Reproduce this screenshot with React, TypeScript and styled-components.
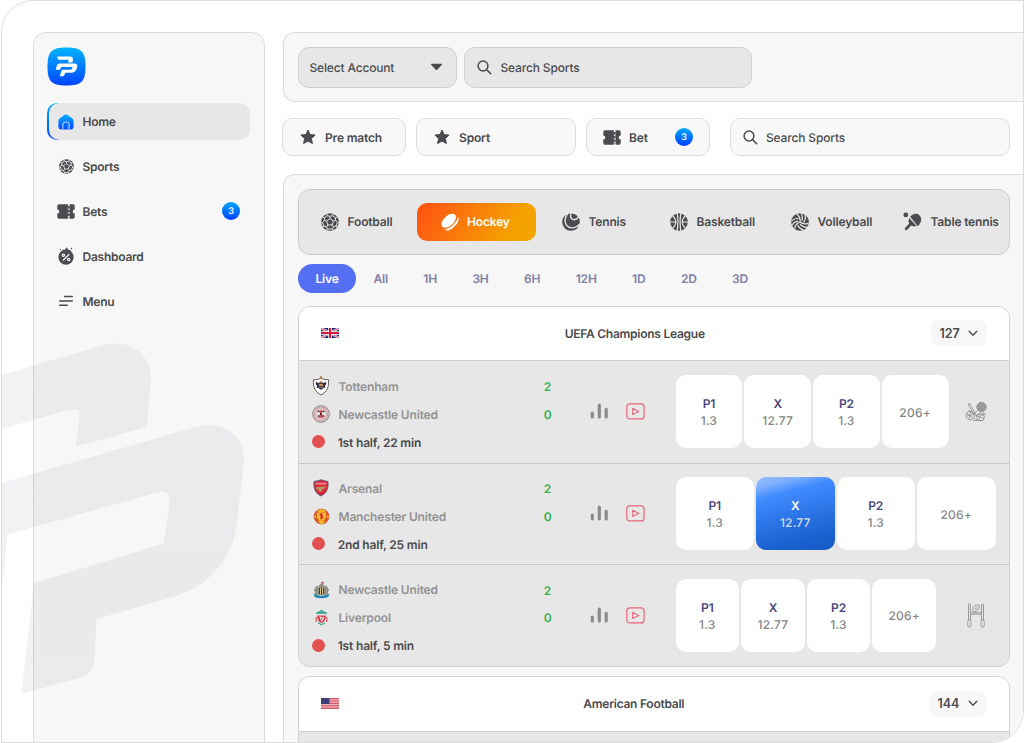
import React from 'react';
import styled, { createGlobalStyle, css } from 'styled-components';

const ink = '#4b4b4d';
const line = '#dcdcdc';
const fog = '#f7f7f7';
const mist = '#e7e7e7';

const GlobalStyle = createGlobalStyle`
  * { box-sizing: border-box; }
  html, body { margin: 0; height: 743px; overflow: hidden; background: #fff; }
  body {
    font-family: Inter, "Liberation Sans", sans-serif;
    font-size: 12px;
    font-weight: 600;
    letter-spacing: -0.17px;
    color: ${ink};
    text-rendering: geometricPrecision;
  }
  svg { display: block; flex: none; }
`;

const Frame = styled.div`
  position: relative;
  display: flex;
  gap: 18px;
  width: 1023px;
  height: 743px;
  margin-left: 1px;
  padding: 31px 0 0 31px;
  border: 1px solid ${line};
  border-radius: 32px 0 32px 0;
  overflow: hidden;
`;

const Watermark = styled.svg`
  position: absolute;
  left: -2px;
  top: -1px;
  pointer-events: none;
`;

/* ---------- sidebar ---------- */

const Sidebar = styled.aside`
  flex: none;
  width: 232px;
  height: 740px;
  padding: 13.5px 14px 0 13px;
  background: ${fog};
  border: 1px solid ${line};
  border-radius: 13px;
  letter-spacing: -0.25px;
`;

const Nav = styled.nav`
  display: flex;
  flex-direction: column;
  gap: 7.9px;
  margin-top: 17px;
`;

const NavItem = styled.a<{ $active?: boolean }>`
  position: relative;
  display: flex;
  align-items: center;
  height: 37px;
  padding: 1px 10px 0 9px;
  isolation: isolate;
  ${(p) => p.$active && css`
    &::before, &::after {
      content: '';
      position: absolute;
      inset: 0;
      z-index: -1;
      border-radius: 10px;
    }
    &::before { right: auto; width: 30px; background: linear-gradient(#00b2ff, #0040ff); }
    &::after { left: 1.5px; background: ${mist}; }
  `}
`;

const NavIcon = styled.span`
  display: flex;
  justify-content: center;
  width: 20px;
  margin-right: 6.5px;
`;

const Badge = styled.span`
  display: flex;
  align-items: center;
  justify-content: center;
  width: 18px;
  height: 18px;
  margin-left: auto;
  border-radius: 50%;
  background: linear-gradient(#00a8ff, #0040ff);
  color: #fff;
  font-size: 9px;
  font-weight: 600;
  line-height: 1;
  letter-spacing: 0;
`;

/* ---------- main ---------- */

const Main = styled.main`
  flex: 1;
  display: flex;
  flex-direction: column;
  min-width: 0;
`;

const TopBar = styled.header`
  display: flex;
  gap: 7px;
  height: 70px;
  flex: none;
  padding: 14px;
  background: ${fog};
  border: 1px solid ${line};
  border-right: 0;
  border-radius: 12px 0 0 12px;
`;

const Field = styled.div<{ $w: number; $select?: boolean }>`
  display: flex;
  align-items: center;
  justify-content: ${(p) => (p.$select ? 'space-between' : 'flex-start')};
  gap: 8.5px;
  width: ${(p) => p.$w}px;
  height: 40.5px;
  padding: ${(p) => (p.$select ? '0 13px 0 10.5px' : '0 12px')};
  background: ${mist};
  border: 1px solid #cfcfcf;
  border-radius: 11px;
  font-weight: 500;
`;

const Filters = styled.div`
  display: flex;
  flex: none;
  height: 38px;
  margin: 16.4px 0 17.6px -1px;
`;

const Filter = styled.div<{ $w: number; $gap: number; $pad: number; $ml?: number; $thin?: boolean }>`
  display: flex;
  align-items: center;
  gap: ${(p) => p.$gap}px;
  width: ${(p) => p.$w}px;
  margin-left: ${(p) => p.$ml ?? 0}px;
  padding: 0 16px 0 ${(p) => p.$pad}px;
  background: #f8f8f8;
  border: 1px solid ${line};
  border-radius: 10px;
  font-weight: ${(p) => (p.$thin ? 500 : 600)};
`;

const Panel = styled.section`
  height: 600px;
  padding: 14px 0 0 14px;
  background: ${fog};
  border: 1px solid ${line};
  border-right: 0;
  border-radius: 12px 0 0 0;
`;

const SportTabs = styled.div`
  display: grid;
  grid-template-columns: 95.5px 145.5px 108px 121px 112px 1fr;
  align-items: center;
  width: 712px;
  height: 66px;
  padding-left: 22px;
  background: ${mist};
  border: 1px solid #cbcbcb;
  border-radius: 12px;
`;

const SportTab = styled.div<{ $active?: boolean }>`
  display: flex;
  align-items: center;
  gap: 8.5px;
  height: 38px;
  white-space: nowrap;
  ${(p) => p.$active && css`
    width: 119px;
    padding-left: 24px;
    border-radius: 10px;
    background: linear-gradient(120deg, #ff5512 5%, #f5a300 80%);
    color: #fff;
  `}
`;

const Ranges = styled.div`
  display: flex;
  align-items: center;
  gap: 35.4px;
  height: 29px;
  margin: 9.5px 0 12.5px;
  color: #8080a8;
`;

const LivePill = styled.span`
  display: flex;
  align-items: center;
  justify-content: center;
  width: 58px;
  height: 29px;
  margin-right: -18px;
  border-radius: 15px;
  background: #556ff3;
  color: #fff;
`;

/* ---------- league table ---------- */

const League = styled.article`
  width: 712px;
  margin-bottom: 9px;
  border: 1px solid #d2d2d2;
  border-radius: 12px;
  background: ${mist};
  overflow: hidden;
`;

const LeagueHead = styled.header<{ $h: number }>`
  display: flex;
  justify-content: space-between;
  align-items: center;
  height: ${(p) => p.$h}px;
  padding: 0 22px 0 21.5px;
  background: #fff;
  border-bottom: 1px solid #cfcfcf;
`;

const LeagueTitle = styled.h2`
  margin: 0;
  font-size: 12px;
  font-weight: 600;
  letter-spacing: -0.26px;
  text-align: center;
`;

const Count = styled.button<{ $w: number }>`
  display: flex;
  align-items: center;
  justify-content: space-between;
  width: ${(p) => p.$w}px;
  height: 26px;
  padding: 0 9px 0 8.5px;
  border: 0;
  border-radius: 8px;
  background: ${fog};
  font: 600 12.5px Inter, sans-serif;
  letter-spacing: 0;
  color: ${ink};
`;

const Row = styled.div<{ $h: number }>`
  display: flex;
  align-items: center;
  height: ${(p) => p.$h}px;
  padding: 0 13.5px 0 14px;
  & + & { border-top: 1px solid #c6c6c6; }
`;

const Teams = styled.div`
  display: grid;
  grid-auto-rows: 27.8px;
  width: 224px;
  padding-top: 4.5px;
`;

const Team = styled.div<{ $live?: boolean }>`
  display: flex;
  align-items: center;
  gap: 9.5px;
  color: ${(p) => (p.$live ? '#4b4b4d' : '#939393')};
`;

const CrestBox = styled.span`
  display: flex;
  width: 16px;
  justify-content: center;
`;

const LiveDot = styled.span`
  width: 13px;
  height: 13px;
  margin: -1px 3px 0 -0.8px;
  border-radius: 50%;
  background: #e25050;
`;

const Scores = styled.div`
  display: grid;
  grid-auto-rows: 27.8px;
  align-items: center;
  width: 21px;
  height: 84px;
  padding-top: 2.7px;
  text-align: center;
  color: #37b24d;
`;

const Actions = styled.div`
  display: flex;
  align-items: center;
  gap: 17px;
  margin: 0 30.5px 0 32px;
`;

const Odds = styled.div`
  display: flex;
  flex: 1;
  gap: 2px;
`;

const Odd = styled.div<{ $active?: boolean }>`
  flex: 1 1 0;
  display: flex;
  flex-direction: column;
  align-items: center;
  justify-content: center;
  height: 73px;
  padding-top: 1px;
  border-radius: 10px;
  background: ${(p) => (p.$active
    ? 'linear-gradient(165deg, #94bcfd 0%, #7fb0fe 12%, #408bff 25%, #3079ec 48%, #1b62d2 78%, #1759c4 100%)'
    : '#fff')};
  line-height: 17px;
  color: ${(p) => (p.$active ? '#fff' : '#4a487d')};
`;

const OddValue = styled.span<{ $active?: boolean }>`
  font-weight: 500;
  letter-spacing: 0.2px;
  color: ${(p) => (p.$active ? '#d3dcec' : '#868686')};
`;

const Side = styled.div<{ $w: number }>`
  display: flex;
  justify-content: flex-end;
  width: ${(p) => p.$w}px;
  padding-right: ${(p) => (p.$w > 50 ? 10.5 : 8.5)}px;
`;

/* ---------- icons ---------- */

const Logo = () => (
  <svg width="39" height="39" viewBox="0 0 39 39">
    <defs>
      <linearGradient id="logo" x1="0" y1="0" x2="0" y2="1">
        <stop offset="0" stopColor="#00b4ff" />
        <stop offset="1" stopColor="#0044ff" />
      </linearGradient>
    </defs>
    <path fill="url(#logo)" d="M19.500.5C34.500.5 38.500 4.500 38.500 19.500S34.500 38.500 19.500 38.500.5 34.500.5 19.500 4.500.5 19.500.5Z" />
    <path fill="#fff" d="M10.200 9.600H22.800Q26.300 9.600 25.900 12.800L25.500 15.500H21.200L21.600 12.800H12.600Q10.900 12.800 10.500 11.300Z" />
    <path fill="#fff" d="M12.300 16.600H27.300Q30.700 16.600 30.200 19.900C29.500 23.700 27.400 25.700 24 25.700H18.300L17.600 27.800Q17.100 29.200 15.600 29.200H12.700L14.900 22.700H23.400Q25.200 22.600 25.600 19.900H14.200L13.700 21.600Q13.200 22.800 12 22.800H8.600L10 18.300Q10.600 16.600 12.300 16.600Z" />
  </svg>
);

const HomeIcon = () => (
  <svg width="16" height="16" viewBox="0 0 16 16">
    <defs>
      <linearGradient id="home" x1="0" y1="0" x2="0" y2="1">
        <stop offset="0" stopColor="#00b0ff" />
        <stop offset="1" stopColor="#0048ff" />
      </linearGradient>
    </defs>
    <path fill="url(#home)" d="M6.700.8Q8 0 9.300.8L14 4.200Q15.600 5.300 15.600 7.200V12.500Q15.600 15.500 12.600 15.500H3.400Q.4 15.500.4 12.500V7.200Q.4 5.300 2 4.200Z" />
    <path fill="none" stroke="#b8d6fb" strokeWidth="1.100" d="M4.800 15.500V11Q4.800 8 8 8T11.200 11V15.500" />
    <path fill="none" stroke="#9cc4fb" strokeWidth=".5" d="M9.500 15.500V11.500" />
  </svg>
);

const FootballIcon = ({ size = 18, bg = mist }: { size?: number; bg?: string }) => (
  <svg width={size} height={size} viewBox="0 0 20 20">
    <circle cx="10" cy="10" r="9.800" fill="#4b4b50" />
    <g stroke={bg} strokeWidth="1.100" fill="none" strokeLinejoin="round">
      <path d="M10 6.100 13.800 8.900 12.400 13.300H7.600L6.200 8.900Z" />
      <path d="M10 6.100V3.700M13.800 8.900 16.200 8M12.400 13.300 13.900 15.400M7.600 13.300 6.100 15.400M6.200 8.900 3.800 8" />
      <path d="M6.500 1 7 3 10 3.700 13 3 13.500 1M13 3 16 5.200 18.300 4.500M16 5.200 16.200 8 18.200 10.600 19.800 10.800M18.200 10.600 17 14.300 13.900 15.400 12.900 17.800 13.500 19.500M17 14.300 18 16M12.900 17.800H7.100L6.500 19.500M7.100 17.800 6.100 15.400 3 14.300 2 16M3 14.300 1.800 10.600.2 10.800M1.800 10.600 3.800 8 4 5.200 1.700 4.500M4 5.200 7 3" />
    </g>
  </svg>
);

const TicketIcon = () => (
  <svg width="18" height="15" viewBox="0 0 18 15">
    <path fill="#4b4b50" d="M2 .3H10.900V14.700H2Q.3 14.700.3 13V9.500A2 2 0 0 0 .3 5.500V2Q.3.3 2 .3ZM12.600.3H16Q17.700.3 17.700 2V5.500A2 2 0 0 0 17.700 9.500V13Q17.700 14.700 16 14.700H12.600Z" />
    <path stroke="#4b4b50" strokeWidth="1.900" strokeDasharray="2.400 1.400" d="M11.700 2V14" />
  </svg>
);

const PromoIcon = () => (
  <svg width="16" height="18" viewBox="0 0 16 18">
    <circle cx="8" cy="10.200" r="7.600" fill="#4b4b50" />
    <path fill="#4b4b50" d="M3.300 6 5.200 2.500 6.600 3.500 8.500.2 11 3.400 12.500 2.800 13 6Z" />
    <circle cx="2.300" cy="2.600" r=".7" fill="#4b4b50" />
    <circle cx="13.400" cy="1.500" r=".7" fill="#4b4b50" />
    <g stroke={fog} fill="none" strokeWidth="1.200" strokeLinecap="round">
      <path d="M11 7.500 5.200 13.200" />
      <circle cx="5.400" cy="8.200" r="1.100" />
      <circle cx="10.700" cy="12.500" r="1.100" />
    </g>
  </svg>
);

const MenuIcon = () => (
  <svg width="16" height="12" viewBox="0 0 16 12" stroke={ink} strokeWidth="1.500" strokeLinecap="round">
    <path d="M6.700 1.500H14.300M1.700 6H14.300M1.700 10.300H9.300" />
  </svg>
);

const StarIcon = () => (
  <svg width="16" height="16" viewBox="0 0 16 16">
    <path fill="#4b4b50" stroke="#4b4b50" strokeLinejoin="round" d="M8 1 10.100 5.500 15.100 6.100 11.400 9.500 12.400 14.500 8 12.100 3.600 14.500 4.600 9.500.9 6.100 5.900 5.500Z" />
  </svg>
);

const SearchIcon = () => (
  <svg width="15" height="15" viewBox="0 0 15 15" fill="none" strokeWidth="1.500" strokeLinecap="round">
    <circle cx="6" cy="6" r="4.900" stroke={ink} />
    <path stroke="#3f3f55" d="M9.700 9.700 13.700 13.700" />
  </svg>
);

const CaretIcon = () => (
  <svg width="13" height="8" viewBox="0 0 13 8">
    <path fill={ink} d="M1.500.8H11.500Q12.600.8 11.900 1.700L7.300 6.700Q6.500 7.400 5.700 6.700L1.100 1.700Q.4.8 1.500.8Z" />
  </svg>
);

const HockeyIcon = () => (
  <svg width="18" height="18" viewBox="0 0 18 18" fill="#fff">
    <ellipse cx="7.700" cy="7.800" rx="8.700" ry="5" transform="rotate(-43 7.700 7.800)" />
    <path d="M17.200 4Q18.800 7 16 10.700 12 15.800 7.500 17.400 4.800 18 3.600 16.800 8 16 12 12.300 16 8.500 17.200 4Z" />
  </svg>
);

const TennisIcon = () => (
  <svg width="18" height="18" viewBox="0 0 18 18">
    <circle cx="9" cy="9" r="8.800" fill="#4b4b50" />
    <g fill="none" stroke={mist} strokeWidth="1.400">
      <path d="M6.500-.3C1.300 4.500 2 13.500 9 14.800 12.800 15.300 15.800 13.200 17.800 11" />
      <path d="M9.300-.2C7.800 3 8.700 6 11.500 6.600 13.800 7 15.600 5.500 16.500 3.500" />
    </g>
  </svg>
);

const BasketballIcon = () => (
  <svg width="18" height="18" viewBox="0 0 18 18">
    <circle cx="9" cy="9" r="8.800" fill="#4b4b50" />
    <path fill="none" stroke={mist} strokeWidth="1.200" d="M0 9H6.200M11.800 9H18M7.200 0Q8.600 9 7.200 18M10.800 0Q9.400 9 10.800 18M2.600 2.500Q9.200 9 2.600 15.500M15.400 2.500Q8.800 9 15.400 15.500" />
  </svg>
);

const VolleyballIcon = () => (
  <svg width="18" height="18" viewBox="0 0 18 18">
    <circle cx="9" cy="9" r="8.800" fill="#4b4b50" />
    <g fill="none" stroke={mist} strokeWidth="1.200">
      {[0, 120, 240].map((a) => (
        <g key={a} transform={`rotate(${a} 9 9)`}>
          <path d="M9 9C9.500 6.500 8.800 3.500 6 1M10.800 7.800C12 5 11.500 2.500 10 0M12.700 9.400C14.600 7 14.800 4.500 14 2" />
        </g>
      ))}
    </g>
  </svg>
);

const TableTennisIcon = () => (
  <svg width="19" height="19" viewBox="0 0 19 19" fill="#4b4b50">
    <circle cx="2.800" cy="2.900" r="2.400" />
    <path d="M7.200 4.800C9.800 1.300 14.300.8 16.800 3.700 19.500 7 18 11.300 14.800 14.300Z" />
    <path d="M6.200 6 13.600 13.900Q10.500 15 8.200 13.600L4 17.900Q2.600 18.600 1.900 17.500 1.400 16.600 2.200 15.700L6.200 11.600Q4.700 9 6.200 6Z" />
  </svg>
);

const BarsIcon = () => (
  <svg width="19" height="17" viewBox="0 0 19 17" stroke="#8b8b8b" strokeWidth="3.200" strokeLinecap="round">
    <path d="M2.300 10V13.900M9.300 2.200V13.900M16.200 6.300V13.900" />
  </svg>
);

const PlayIcon = () => (
  <svg width="19" height="17" viewBox="0 0 19 17" fill="none" stroke="#e8677a" strokeLinejoin="round">
    <rect x=".8" y=".9" width="17.300" height="15" rx="3" strokeWidth="1.200" />
    <path strokeWidth="1.100" d="M6.700 5.300 12.700 8.400 6.700 11.500Z" />
  </svg>
);

const ChevronIcon = () => (
  <svg width="10" height="7" viewBox="0 0 10 7" fill="none" stroke={ink} strokeWidth="1.300" strokeLinecap="round" strokeLinejoin="round">
    <path d="M1.200 1.300 5 5.200 8.800 1.300" />
  </svg>
);

const UkFlag = () => (
  <svg width="18" height="10" viewBox="0 0 18 10">
    <rect width="18" height="10" fill="#1d2f78" />
    <path stroke="#fff" strokeWidth="2" d="M0 0 18 10M18 0 0 10" />
    <path stroke="#d2263f" strokeWidth=".8" d="M0 0 18 10M18 0 0 10" />
    <path stroke="#fff" strokeWidth="3.600" d="M9 0V10M0 5H18" />
    <path stroke="#d2163a" strokeWidth="2" d="M9 0V10M0 5H18" />
  </svg>
);

const UsFlag = () => (
  <svg width="18" height="11" viewBox="0 0 18 11">
    <rect width="18" height="11" fill="#f6dadd" />
    <path stroke="#cf3d50" strokeWidth=".9" d="M0 .5H18M0 2.200H18M0 3.900H18M0 5.600H18M0 7.300H18M0 9H18M0 10.600H18" />
    <rect width="8.500" height="6" fill="#3a3f78" />
  </svg>
);

const crests: Record<string, React.ReactNode> = {
  gold: (
    <svg width="18" height="20" viewBox="0 0 18 20">
      <path fill="#fff" stroke="#54483c" strokeWidth=".9" d="M1.500 3.800Q5 4.200 9 2.200 13 4.200 16.500 3.800C17 11 15.500 15.500 9 19 2.500 15.500 1 11 1.500 3.800Z" />
      <path fill="#b98243" d="M8.300 0H9.700L10.200 3H7.800ZM9 4.800 12 7 11.800 11 9 13.500 6.200 11 6 7Z" />
      <path fill="#252b4c" d="M4 5.800 7 7.500 6.700 12H4.800L5 9.500 3.700 8.300ZM14 5.800 11 7.500 11.300 12H13.200L13 9.500 14.300 8.300ZM6 11.800H12L9.700 13.500H8.300Z" />
      <path stroke="#3b3b55" strokeWidth="1" d="M7 7.500H11M7 10.500H11" />
      <path stroke="#d8ad78" strokeWidth=".8" d="M7 9H11" />
    </svg>
  ),
  round: (
    <svg width="18" height="18" viewBox="0 0 18 18">
      <circle cx="9" cy="9" r="8.300" fill="#e5dada" stroke="#77777a" strokeWidth=".9" />
      <circle cx="9" cy="9" r="6.700" fill="none" stroke="#d28a90" strokeWidth="1.300" strokeDasharray="1.600 .8" />
      <circle cx="9" cy="9" r="5.100" fill="#eee" stroke="#a8686c" strokeWidth=".5" />
      <path fill="#c94a54" d="M7.400 5.200H10.600L10 8.500 11.500 12.800H6.500L8 8.500Z" />
      <path stroke="#3c3036" strokeWidth="1.400" d="M5.500 6.500H7.500M10.500 6.500H12.500M5.700 11H7.300M10.700 11H12.300M8 9H10" />
    </svg>
  ),
  cannon: (
    <svg width="16" height="18" viewBox="0 0 16 18">
      <path fill="#d8293a" stroke="#5a5f80" strokeWidth=".9" d="M1 2.500Q5 1.800 8 .8 11 1.800 15 2.500C15.500 9.500 14 14 8 17 2 14 .5 9.500 1 2.500Z" />
      <path fill="#ee8a90" d="M2.600 3.800H13.400V5.600H2.600Z" />
      <path fill="#b8975f" d="M3.300 8.300 12.500 7.300 12.700 9 9.300 10.200A1.900 1.900 0 1 1 5.700 10.500L3.200 10.200Z" />
    </svg>
  ),
  devil: (
    <svg width="17" height="17" viewBox="0 0 17 17">
      <circle cx="8.500" cy="8.500" r="7.500" fill="#e0551f" stroke="#b8402a" strokeWidth=".6" />
      <path fill="#efb527" d="M.4 8.500 3 7V10.500ZM16.600 8.500 14 7V10.500ZM4.500 2.200Q8.500.5 12.500 2.200L12 4.200H5ZM5 12.500H12L10.500 15.500Q8.500 16.500 6.500 15.500Z" />
      <path fill="#f7bf36" d="M4 4.500H13V9Q12.500 12 8.500 12.800 4.500 12 4 9Z" />
      <path fill="#d8361f" d="M7.500 5.200H9.800L9.500 7.500 10.800 9 9 11.500 7 10.800 7.800 8.500 6.200 7Z" />
    </svg>
  ),
  castle: (
    <svg width="17" height="18" viewBox="0 0 17 18">
      <path fill="#96908a" stroke="#6b6762" strokeWidth=".5" d="M1.500 8.500 4 4.800 5.300 7.500 6.500 4 8.500 3.300 10.800 4 11.700 7.500 13 4.800 15.500 8.500 14.200 13.500H2.800Z" />
      <path fill="#ddc68c" d="M6 6.500H11V12.500L8.500 14.300 6 12.500Z" />
      <path stroke="#2c2c2e" strokeWidth=".9" d="M6.500 7V13M8.500 6V14M10.500 7V13" />
      <path fill="#d44848" d="M8.200.8 10.800 1.300V2.700L8.900 2.500V4H8.200Z" />
      <path fill="#2483ae" d="M.5 12.700Q4.500 14.700 8.500 14.700T16.500 12.700L15.300 16Q8.500 18.500 1.700 16Z" />
    </svg>
  ),
  bird: (
    <svg width="13" height="17" viewBox="0 0 13 17">
      <path fill="#4fa79d" d="M1 3.200Q4.500 2.500 6.500.5 8.500 2.500 12 3.200L11.300 5.500H1.700Z" />
      <path fill="#e4efe9" d="M2 5H11V13.500L6.500 16 2 13.500Z" />
      <path fill="#cd3a46" d="M2.200 6.500H10.800V8L9.200 12.500 6.500 14 3.800 12.500 2.200 8Z" />
      <path fill="#f6e6e8" d="M4.200 7.200 7.500 8.200 9 7.200 8.300 11 6.300 12.900 5.300 10Z" />
      <path fill="#cd3a46" d="M6.300 8.800H7.300L6.900 11.400H6.200Z" />
      <path stroke="#d45b60" strokeWidth="1.300" d="M1.200 8V13M11.800 8V13" />
      <path stroke="#4fa79d" strokeWidth="1.300" fill="none" d="M3 13.800 6.500 15.800 10 13.800" />
    </svg>
  ),
};

const GearIcon = () => (
  <svg width="22" height="22" viewBox="0 0 22 22" fill="none" stroke="#8b8b8b" strokeWidth=".8">
    <circle cx="16.500" cy="6" r="4.700" fill="#a4a4a4" />
    <path d="M12.500 3.500 18.500 9.500M14.500 2 20 7.500M12 6.500 15.500 10M19 3 12.800 9.200M16.500 1.700 11.700 6.500M20.400 5.500 15.300 10.500" />
    <path d="M12.500 9.500 9.500 12.500M4.500 2.500 11 13.500M3.300 4Q3.200 1.800 5.500 2.500M3.300 4 9 13.500M3 9.500 13.500 15.500" />
    <circle cx="5.200" cy="14.500" r="4.300" />
    <path d="M2 12.500 8.500 17.500M5.500 10.200 4 18.500M1.500 15 9.500 13.500" />
    <circle cx="15.500" cy="16" r="3.900" />
    <path d="M11.800 15 19 17.500M17 12.300 13.500 19.200M9 16.500 12 19.500M12.500 13.500 19.300 14.200" />
    <path d="M8 19.500H18M18 11.500 21 13.500" />
  </svg>
);

const GoalIcon = () => (
  <svg width="18" height="25" viewBox="0 0 18 25" fill="none" stroke="#8e8e8e" strokeWidth=".9">
    <path d="M1.500 17V2Q1.500 1 2.500 1T3.500 2V17M14.500 17V2Q14.500 1 15.500 1T16.500 2V17" />
    <path d="M3.500 9.800H14.500M3.500 11.200H14.500" />
    <rect x=".8" y="17" width="3.200" height="7" rx="1.300" />
    <rect x="14" y="17" width="3.200" height="7" rx="1.300" />
    <path d="M6 8.300Q5 3.500 9 2.300 11.500 1.600 12.300 2.500 12.800 7 9.500 8.300 7.500 9 6 8.300ZM7.700 6.700 10.500 4M8.200 4.800 9.800 6.400" />
  </svg>
);

/* ---------- data ---------- */

interface Match {
  home: [string, string];
  away: [string, string];
  clock: string;
  height: number;
  picked?: string;
  side?: number;
  sideIcon?: React.ReactNode;
}

const matches: Match[] = [
  { home: ['gold', 'Tottenham'], away: ['round', 'Newcastle United'], clock: '1st half, 22 min', height: 102, side: 47, sideIcon: <GearIcon /> },
  { home: ['cannon', 'Arsenal'], away: ['devil', 'Manchester United'], clock: '2nd half, 25 min', height: 101, picked: 'X' },
  { home: ['castle', 'Newcastle United'], away: ['bird', 'Liverpool'], clock: '1st half, 5 min', height: 102, side: 59.5, sideIcon: <GoalIcon /> },
];

const prices: [string, string][] = [['P1', '1.3'], ['X', '12.77'], ['P2', '1.3']];

const MatchRow = ({ match }: { match: Match }) => (
  <Row $h={match.height}>
    <Teams>
      {[match.home, match.away].map(([crest, name]) => (
        <Team key={name}><CrestBox>{crests[crest]}</CrestBox>{name}</Team>
      ))}
      <Team $live><LiveDot />{match.clock}</Team>
    </Teams>
    <Scores><span>2</span><span>0</span></Scores>
    <Actions><BarsIcon /><PlayIcon /></Actions>
    <Odds>
      {prices.map(([label, value]) => {
        const active = label === match.picked;
        return (
          <Odd key={label} $active={active}>
            {label}
            <OddValue $active={active}>{value}</OddValue>
          </Odd>
        );
      })}
      <Odd><OddValue>206+</OddValue></Odd>
    </Odds>
    {match.side && <Side $w={match.side}>{match.sideIcon}</Side>}
  </Row>
);

export default function App() {
  return (
    <>
      <GlobalStyle />
      <Frame>
        <Sidebar>
          <Logo />
          <Nav>
            <NavItem $active><NavIcon><HomeIcon /></NavIcon>Home</NavItem>
            <NavItem><NavIcon><FootballIcon size={15} bg={fog} /></NavIcon>Sports</NavItem>
            <NavItem><NavIcon><TicketIcon /></NavIcon>Bets<Badge>3</Badge></NavItem>
            <NavItem><NavIcon><PromoIcon /></NavIcon>Dashboard</NavItem>
            <NavItem><NavIcon><MenuIcon /></NavIcon>Menu</NavItem>
          </Nav>
        </Sidebar>
        <Watermark width="260" height="743" viewBox="0 0 260 743">
          <defs>
            <linearGradient id="mark" x1="0" y1="0" x2="0" y2="1">
              <stop offset="0" stopColor="#14324f" stopOpacity=".06" />
              <stop offset="1" stopColor="#24184a" stopOpacity=".06" />
            </linearGradient>
          </defs>
          <path
            fill="url(#mark)"
            d="M0 375.300 103 345.500C130 337.500 153 355 150.700 381L147 427 76 446.500 79.300 417Q80 406.500 70 409.600L0 429.300ZM0 483.200 195 427.300C222 418.500 246 437 244 461L236.500 526C232 560 208 586 175 596.500L96.500 619 94.700 658Q93 674 77 678.500L21.500 693.500 34 583 164 543.500 169.700 502Q170 489.500 158 492.200L7.500 534.500 2.700 582 0 600Z"
          />
        </Watermark>
        <Main>
          <TopBar>
            <Field $w={159} $select>Select Account<CaretIcon /></Field>
            <Field $w={288}><SearchIcon />Search Sports</Field>
          </TopBar>
          <Filters>
            <Filter $w={124} $pad={17} $gap={9}><StarIcon />Pre match</Filter>
            <Filter $w={160} $pad={17} $gap={9} $ml={10}><StarIcon />Sport</Filter>
            <Filter $w={124} $pad={16} $gap={8} $ml={10}><TicketIcon />Bet<Badge>3</Badge></Filter>
            <Filter $w={280} $pad={12} $gap={8} $ml={20} $thin><SearchIcon />Search Sports</Filter>
          </Filters>
          <Panel>
            <SportTabs>
              <SportTab><FootballIcon />Football</SportTab>
              <SportTab $active><HockeyIcon />Hockey</SportTab>
              <SportTab><TennisIcon />Tennis</SportTab>
              <SportTab><BasketballIcon />Basketball</SportTab>
              <SportTab><VolleyballIcon />Volleyball</SportTab>
              <SportTab><TableTennisIcon />Table tennis</SportTab>
            </SportTabs>
            <Ranges>
              <LivePill>Live</LivePill>
              {['All', '1H', '3H', '6H', '12H', '1D', '2D', '3D'].map((r) => <span key={r}>{r}</span>)}
            </Ranges>
            <League>
              <LeagueHead $h={54}>
                <UkFlag />
                <LeagueTitle>UEFA Champions League</LeagueTitle>
                <Count $w={56}>127<ChevronIcon /></Count>
              </LeagueHead>
              {matches.map((m) => <MatchRow key={m.clock} match={m} />)}
            </League>
            <League>
              <LeagueHead $h={55}>
                <UsFlag />
                <LeagueTitle>American Football</LeagueTitle>
                <Count $w={58}>144<ChevronIcon /></Count>
              </LeagueHead>
              <Row $h={102} />
            </League>
          </Panel>
        </Main>
      </Frame>
    </>
  );
}
